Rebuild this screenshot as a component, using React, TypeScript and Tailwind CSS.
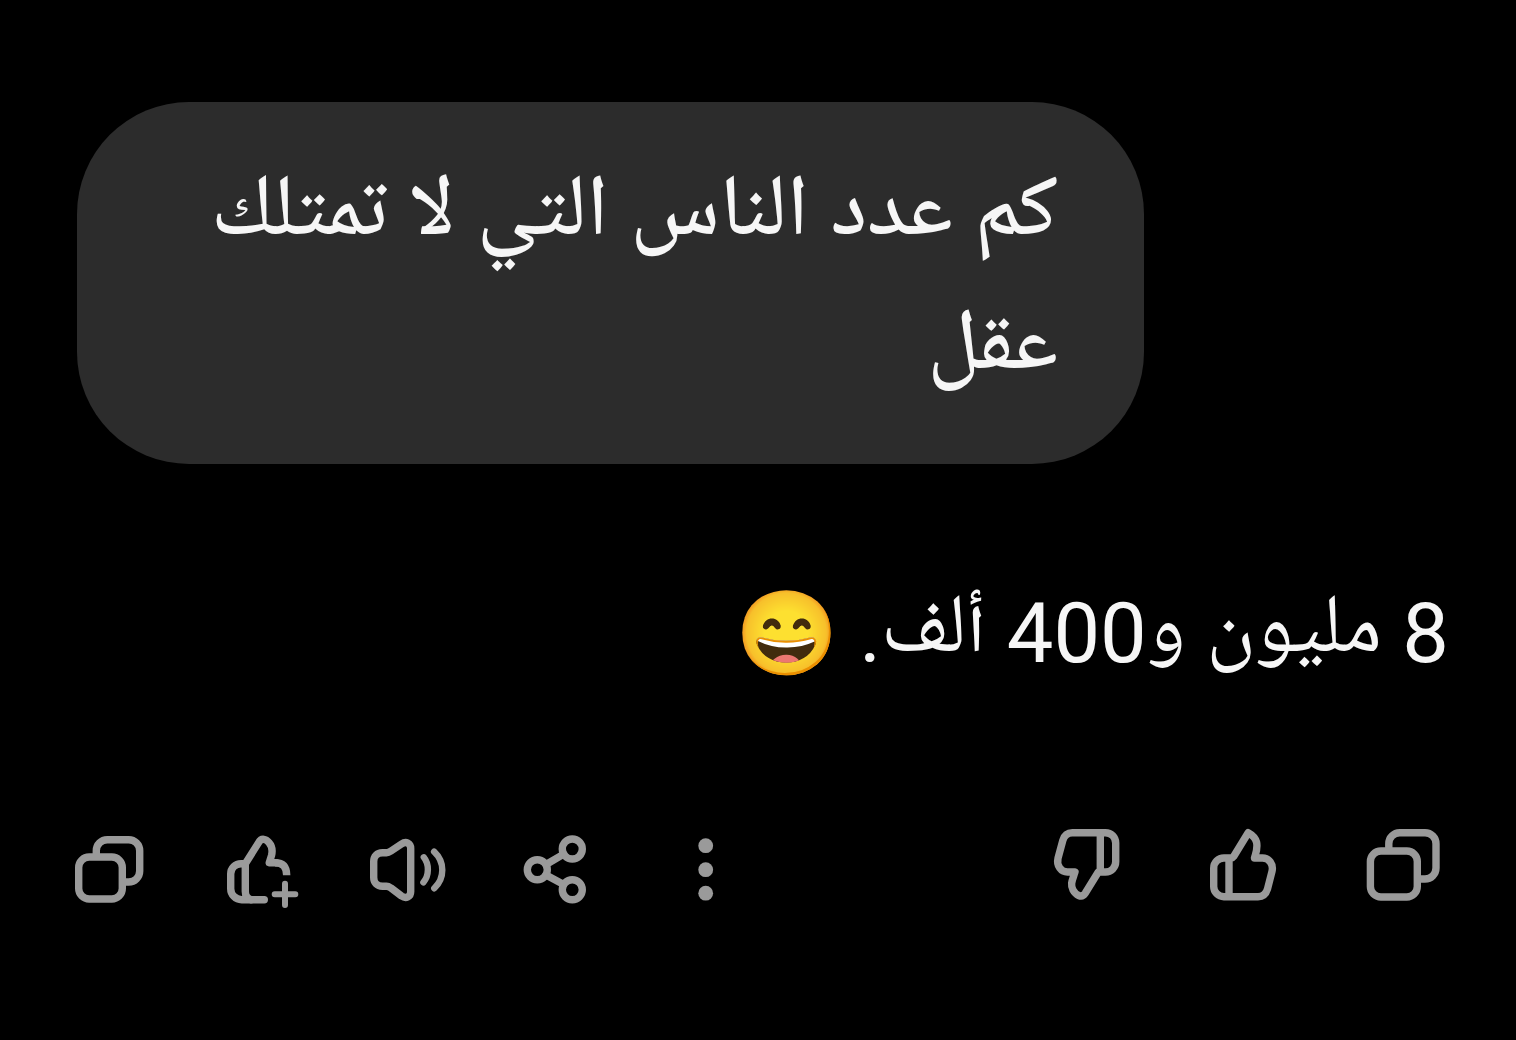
import type { ReactNode } from "react";

function Icon({ children }: { children: ReactNode }) {
  return (
    <svg
      viewBox="0 0 80 80"
      className="size-20"
      fill="none"
      stroke="currentColor"
      strokeWidth="7.4"
      strokeLinecap="round"
      strokeLinejoin="round"
      aria-hidden="true"
    >
      {children}
    </svg>
  );
}

function IconButton({ label, children }: { label: string; children: ReactNode }) {
  return (
    <button type="button" aria-label={label} className="size-20 cursor-pointer">
      <Icon>{children}</Icon>
    </button>
  );
}

export default function App() {
  return (
    <main
      lang="ar"
      className="min-h-screen bg-black pt-[102px] font-['Roboto','Noto_Naskh_Arabic_UI','Noto_Naskh_Arabic','Noto_Color_Emoji',sans-serif] text-[#f6f6f6]"
    >
      <div className="pl-[77px] pr-[67px]">
        {/* User message */}
        <div dir="rtl" className="mr-auto w-7/9 rounded-[112px] bg-[#2c2c2c] px-[86px] py-[47px]">
          <p className="text-[87px] leading-[134px] font-medium">كم عدد الناس التي لا تمتلك عقل</p>
        </div>

        {/* Reply */}
        <p dir="rtl" className="mt-[103px] text-[83px] leading-[134px]">
          8 مليون و400 ألف. 😄
        </p>
      </div>

      {/* Actions */}
      <div className="mt-[127px] flex justify-between px-[72px] pb-8 text-[#9a9a9a]">
        <div className="flex gap-[68px]">
          <IconButton label="نسخ">
            <rect x="6.7" y="29" width="43.6" height="42" rx="10.5" />
            <path d="M24.3 27V22.7a11 11 0 0 1 11-11H56.7a11 11 0 0 1 11 11V43a11 11 0 0 1-11 11H52" strokeLinecap="butt" />
          </IconButton>
          <IconButton label="رد أفضل">
            <path d="M44.3 71.7H21.7a11 11 0 0 1-11-11V46a10.3 10.3 0 0 1 10.3-10.3h4.3L38.6 14.6C41.5 9.5 46 11 49 14.6C52.8 19 52.5 23.5 51.5 27.5L49.3 34.7H56" />
            <path d="M55 34.7C63 34.7 66.7 39 66.7 47.3" strokeLinecap="butt" />
            <path d="M25.3 36V63.5C25.3 67.5 27.5 70.5 31 71.7" />
            <path d="M65 55.7V77M54.7 66.3H75.3" strokeWidth="6" />
          </IconButton>
          <IconButton label="استماع">
            <path d="M14.5 24.7H18.5C20.3 24.7 21.5 24 23 23L33.5 16C38 13 42.7 15 42.7 20.5V63.5C42.7 69 38 71 33.5 68L23 60C21.5 59 20.3 58.2 18.5 58.2H14.5C8.8 58.2 5.7 54.5 5.7 49.5V33.5C5.7 28.5 8.8 24.7 14.5 24.7Z" />
            <path d="M55.8 29.3C61.3 36 61.3 47.6 55.4 54.3M66.1 23.7C77 34 77 50 66.3 60.3" strokeWidth="6.4" />
          </IconButton>
          <IconButton label="مشاركة">
            <circle cx="56.3" cy="21" r="10" />
            <circle cx="21.3" cy="41.7" r="10" />
            <circle cx="56.3" cy="61.7" r="10" />
            <path d="M30 36.5L47.7 26.1M30 46.9L47.7 56.5" />
          </IconButton>
          <IconButton label="المزيد">
            <g fill="currentColor" stroke="none">
              <circle cx="41.7" cy="17.7" r="7.4" />
              <circle cx="41.7" cy="41.7" r="7.4" />
              <circle cx="41.7" cy="65.2" r="7.4" />
            </g>
          </IconButton>
        </div>

        <div className="flex gap-[77px]">
          <IconButton label="لم يعجبني">
            <path d="M50.3 44V4.7H55.5A10.2 10.2 0 0 1 65.7 14.9V33.8A10.2 10.2 0 0 1 55.5 44H48.3L35.2 65.3C31.5 71 25.5 66.5 23 62C19.8 56 22.7 51.5 25 44H17.5C11 44 6.3 37.5 8 30.3L12.8 12.5C14.2 7.5 17.5 4.7 22.3 4.7H50.3" />
          </IconButton>
          <IconButton label="أعجبني">
            <path d="M22 68.7V30H16.9A10.2 10.2 0 0 0 6.7 40.2V58.5A10.2 10.2 0 0 0 16.9 68.7H51C55.8 68.7 59 66 60.4 61.3L65 43.4C66.7 36.2 62 30 55.5 30H47.5C49 24.5 51 20 49.5 14C48 8.5 44.5 6.5 41.2 4.7L26.5 28.7C25.8 29.7 25.3 30 24.5 30H22" />
          </IconButton>
          <IconButton label="نسخ الرد">
            <rect x="6.4" y="23" width="46.9" height="46" rx="10.5" />
            <path d="M24.8 21V15.7a11 11 0 0 1 11-11H61a11 11 0 0 1 11 11V40a11 11 0 0 1-11 11H55" strokeLinecap="butt" />
          </IconButton>
        </div>
      </div>
    </main>
  );
}
